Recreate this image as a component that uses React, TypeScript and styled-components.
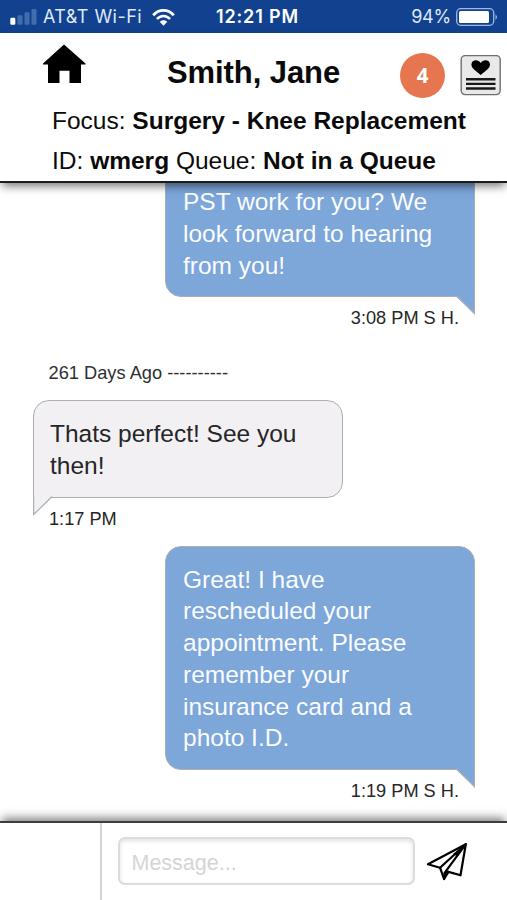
import React from 'react';
import styled, { createGlobalStyle } from 'styled-components';

const GlobalStyle = createGlobalStyle`
  * { box-sizing: border-box; }
  body {
    margin: 0;
    background: #fff;
    font-family: 'Liberation Sans', Arial, sans-serif;
  }
`;

const Screen = styled.div`
  width: 507px;
  height: 900px;
  display: flex;
  flex-direction: column;
  overflow: hidden;
  background: #fff;
`;

const StatusBar = styled.div`
  height: 33px;
  flex: none;
  display: grid;
  grid-template-columns: 206px 102px 1fr;
  align-items: center;
  padding: 1px 9px 0 10px;
  background: #12428f;
  color: #fff;
  font-family: Inter, sans-serif;
  font-size: 18px;
  line-height: 32px;
  white-space: nowrap;
`;

const StatusGroup = styled.div<{ $end?: boolean }>`
  display: flex;
  align-items: center;
  justify-content: ${p => (p.$end ? 'flex-end' : 'flex-start')};
  color: #dfe9fa;
`;

const Carrier = styled.span`
  margin-left: 6px;
  width: 109px;
  letter-spacing: 0.45px;
`;

const Clock = styled.span`
  font-weight: 600;
  letter-spacing: 0.85px;
`;

const Percent = styled.span`
  margin-right: 5px;
  letter-spacing: -0.2px;
`;

const Header = styled.header`
  position: relative;
  z-index: 1;
  flex: none;
  height: 150px;
  background: #fff;
  border-bottom: 2px solid #1b1c1e;
  box-shadow: 0 5px 9px -2px rgba(0, 0, 0, 0.55);
  color: #0a0a0a;
`;

const TitleRow = styled.div`
  height: 68px;
  display: grid;
  grid-template-columns: 124px 233px 58px 1fr;
  padding-left: 43px;
`;

const HomeButton = styled.div`
  padding-top: 11px;
`;

const Name = styled.h1`
  margin: 0;
  padding-top: 22px;
  font-size: 31px;
  line-height: 36px;
  letter-spacing: -0.08px;
  white-space: nowrap;
`;

const Badge = styled.div`
  width: 45px;
  height: 45px;
  margin-top: 20px;
  border-radius: 50%;
  display: flex;
  align-items: center;
  justify-content: center;
  background: #e67650;
  color: #fff;
  font: 700 20.5px/44px 'Open Sans', sans-serif;
  padding-bottom: 1px;
`;

const NotesButton = styled.div`
  padding-top: 22px;
  margin-left: 2px;
`;

const Details = styled.div`
  padding-left: 52px;
  font-size: 24.5px;
  line-height: 39.5px;
  white-space: nowrap;
`;

const DetailLine = styled.div`
  letter-spacing: 0;
`;

const Chat = styled.main`
  flex: 1;
  min-height: 0;
  overflow: hidden;
  display: flex;
  flex-direction: column;
  justify-content: flex-end;
  padding: 0 32px 20px 33px;
`;

const Message = styled.article<{ $sent?: boolean }>`
  flex: none;
  display: flex;
  flex-direction: column;
  align-items: ${p => (p.$sent ? 'flex-end' : 'flex-start')};
  margin-top: 17px;
`;

const Bubble = styled.div<{ $sent?: boolean }>`
  position: relative;
  width: 310px;
  padding: ${p => (p.$sent ? '17px 15px 15px 17px' : '17px 15px 15px 16px')};
  border: 1.5px solid #abaeb2;
  border-radius: ${p => (p.$sent ? '16px 16px 0 16px' : '16px 16px 16px 0')};
  background: ${p => (p.$sent ? '#7da6d9' : '#f2f0f2')};
  color: ${p => (p.$sent ? '#fafcff' : '#252528')};
  font-size: 24.5px;
  line-height: 31.7px;
`;

const Tail = styled.svg<{ $sent?: boolean }>`
  position: absolute;
  top: calc(100% - 1px);
  ${p => (p.$sent ? 'right: -1px;' : 'left: -1px;')}
  width: 21px;
  height: 20px;
  display: block;
  transform: ${p => (p.$sent ? 'none' : 'scaleX(-1)')};
`;

const Line = styled.div`
  white-space: nowrap;
`;

const Stamp = styled.div`
  margin: 11px 16px 0;
  font-size: 18.2px;
  line-height: 20px;
  color: #262628;
  white-space: nowrap;
`;

const DayDivider = styled.div`
  flex: none;
  margin: 35px 0 0 15.5px;
  font-size: 18.25px;
  line-height: 20px;
  color: #2f2f32;
  white-space: nowrap;
`;

const Composer = styled.footer`
  position: relative;
  z-index: 1;
  flex: none;
  height: 79px;
  display: flex;
  background: #fff;
  border-top: 2px solid #3d3d3f;
  box-shadow: 0 -5px 9px -2px rgba(0, 0, 0, 0.5);
`;

const Attachments = styled.div`
  width: 102px;
  border-right: 2px solid #d3d3d3;
`;

const MessageInput = styled.input`
  width: 297px;
  height: 48px;
  margin: 14px 0 0 16px;
  padding: 5px 12px 0 11.5px;
  border: 2px solid #dcdcdc;
  border-radius: 7px;
  outline: none;
  background: #fff;
  box-shadow: inset 0 2px 4px rgba(0, 0, 0, 0.12);
  font: 21.5px 'Liberation Sans', Arial, sans-serif;
  &::placeholder {
    color: #d5d5d5;
    opacity: 1;
  }
`;

const SendButton = styled.div`
  margin: 19px 0 0 11px;
`;

const SignalIcon = () => (
  <svg width="27" height="18" viewBox="0 0 27 18">
    <rect x="0.3" y="9.8" width="5" height="7" rx="1.2" fill="#fff" />
    <rect x="7.5" y="7.3" width="5" height="9.5" rx="1.2" fill="#416cae" />
    <rect x="14.5" y="4.3" width="5" height="12.5" rx="1.2" fill="#416cae" />
    <rect x="21.5" y="1" width="5" height="15.8" rx="1.2" fill="#416cae" />
  </svg>
);

const WifiIcon = () => (
  <svg width="23" height="17" viewBox="0 0 23 17">
    <path d="M1.2 6.3C7-.2 16-.2 21.8 6.3" fill="none" stroke="#fff" strokeWidth="2.8" />
    <path d="M5 10C8.5 5.9 14.5 5.9 18 10" fill="none" stroke="#fff" strokeWidth="2.6" />
    <path d="M11.5 16.7L7.7 12.8C9.7 10.6 13.3 10.6 15.3 12.8Z" fill="#fff" />
  </svg>
);

const BatteryIcon = () => (
  <svg width="42" height="18" viewBox="0 0 42 18">
    <rect x="0.7" y="0.7" width="37" height="16.6" rx="4" fill="none" stroke="#9db7df" strokeWidth="1.3" />
    <rect x="3" y="3" width="30" height="12" rx="1.5" fill="#fff" />
    <path d="M39.5 6.2Q42.5 9 39.5 11.8Z" fill="#9db7df" />
  </svg>
);

const HomeIcon = () => (
  <svg width="43" height="40" viewBox="0 0 43 40">
    <path d="M21 0.5L42.5 19.5V20.5H38V39H26.5V26.8H16.5V39H5V20.5H0V19.5Z" fill="#000" />
  </svg>
);

const NotesIcon = () => (
  <svg width="41" height="41" viewBox="0 0 41 41">
    <rect x="1.2" y="0.6" width="39" height="39" rx="4" fill="#e9e9ea" stroke="#6f6f72" strokeWidth="1.4" />
    <path
      d="M20.7 20C17 16.8 11.4 13.5 11.4 9.8C11.4 4.6 18.2 4 20.7 7.9C23.2 4 30 4.6 30 9.8C30 13.5 24.4 16.8 20.7 20Z"
      fill="#000"
    />
    <path d="M6 24.3H35.5M6 28.9H35.5M6 33.5H35.5" stroke="#19191b" strokeWidth="2.4" />
  </svg>
);

const SendIcon = () => (
  <svg width="43" height="39" viewBox="0 0 43 39">
    <g fill="none" stroke="#000" strokeWidth="2.2" strokeLinejoin="round" strokeLinecap="round">
      <path d="M1.9 22.3L39.8 2.2L34.5 33.3L22.5 29.9L18.1 37L14 25.7Z" />
      <path d="M39.8 2.2L14 25.7M39.8 2.2L18.6 30.8L18.1 37M18.6 30.8L22.5 29.9" />
    </g>
    <path d="M40 2L27 12L31.5 14.5Z" fill="#000" />
    <path d="M18.6 30.8L22.5 29.9L18.1 37Z" fill="#000" />
  </svg>
);

type ChatMessageProps = { sent?: boolean; lines: string[]; time: string };

const ChatMessage = ({ sent, lines, time }: ChatMessageProps) => (
  <Message $sent={sent}>
    <Bubble $sent={sent}>
      {lines.map(line => (
        <Line key={line}>{line}</Line>
      ))}
      <Tail $sent={sent} viewBox="0 0 21 20">
        <path d="M1.5 0L20.4 18.5V0Z" fill={sent ? '#7da6d9' : '#f2f0f2'} />
        <path d="M1.8 0.5L20.4 18.5V0" fill="none" stroke="#abaeb2" strokeWidth="1.2" />
      </Tail>
    </Bubble>
    <Stamp>{time}</Stamp>
  </Message>
);

export default function App() {
  return (
    <>
      <GlobalStyle />
      <Screen>
        <StatusBar>
          <StatusGroup>
            <SignalIcon />
            <Carrier>AT&amp;T Wi-Fi</Carrier>
            <WifiIcon />
          </StatusGroup>
          <Clock>12:21 PM</Clock>
          <StatusGroup $end>
            <Percent>94%</Percent>
            <BatteryIcon />
          </StatusGroup>
        </StatusBar>
        <Header>
          <TitleRow>
            <HomeButton>
              <HomeIcon />
            </HomeButton>
            <Name>Smith, Jane</Name>
            <Badge>4</Badge>
            <NotesButton>
              <NotesIcon />
            </NotesButton>
          </TitleRow>
          <Details>
            <DetailLine>
              Focus: <b>Surgery - Knee Replacement</b>
            </DetailLine>
            <DetailLine>
              ID: <b>wmerg</b> Queue: <b>Not in a Queue</b>
            </DetailLine>
          </Details>
        </Header>
        <Chat>
          <ChatMessage
            sent
            lines={['PST work for you? We', 'look forward to hearing', 'from you!']}
            time="3:08 PM S H."
          />
          <DayDivider>261 Days Ago ----------</DayDivider>
          <ChatMessage lines={['Thats perfect! See you', 'then!']} time="1:17 PM" />
          <ChatMessage
            sent
            lines={[
              'Great! I have',
              'rescheduled your',
              'appointment. Please',
              'remember your',
              'insurance card and a',
              'photo I.D.',
            ]}
            time="1:19 PM S H."
          />
        </Chat>
        <Composer>
          <Attachments />
          <MessageInput placeholder="Message..." aria-label="Message" />
          <SendButton>
            <SendIcon />
          </SendButton>
        </Composer>
      </Screen>
    </>
  );
}
